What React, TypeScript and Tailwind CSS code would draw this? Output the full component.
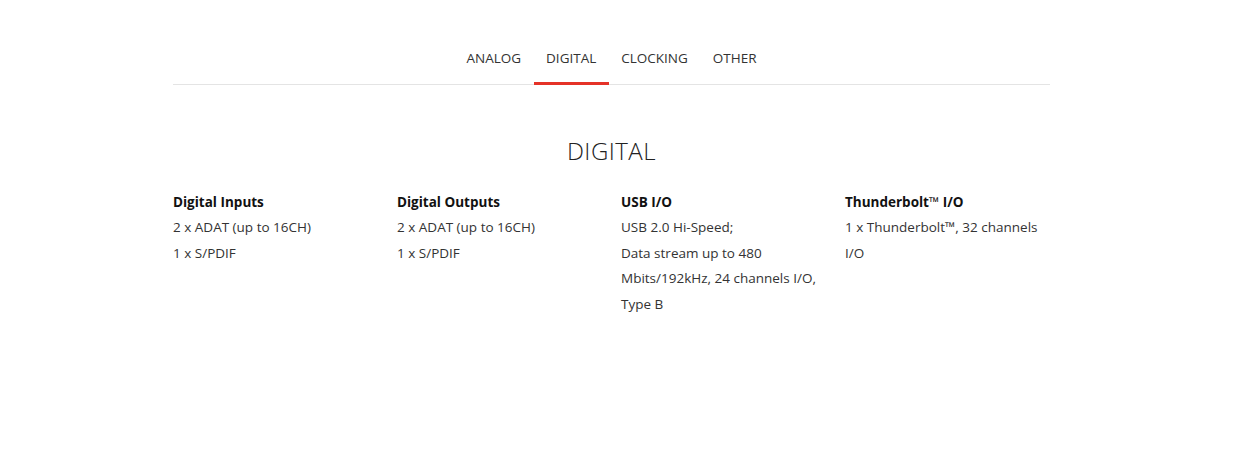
import React from "react";

const tabs = ["ANALOG", "DIGITAL", "CLOCKING", "OTHER"];

const cols = [
  { title: <>Digital Inputs</>, lines: ["2 x ADAT (up to 16CH)", "1 x S/PDIF"] },
  { title: <>Digital Outputs</>, lines: ["2 x ADAT (up to 16CH)", "1 x S/PDIF"] },
  {
    title: <>USB I/O</>,
    lines: ["USB 2.0 Hi-Speed;", "Data stream up to 480 Mbits/192kHz, 24 channels I/O, Type B"],
  },
  {
    title: (
      <>
        Thunderbolt<span className="font-normal">™</span> I/O
      </>
    ),
    lines: ["1 x Thunderbolt™, 32 channels I/O"],
  },
];

export default function App() {
  return (
    <div
      className="w-[1236px] h-[476px] bg-white text-[#222]"
      style={{ fontFamily: '"Open Sans", sans-serif' }}
    >
      <div className="ml-[173px] w-[877px] pt-[46px]">
        <div className="flex justify-center border-b border-[#e4e4e4]">
          {tabs.map((t) => (
            <div
              key={t}
              className="relative px-[12.5px] pb-[14px] text-[13.5px] leading-[24px] text-[#333]"
            >
              {t}
              {t === "DIGITAL" && (
                <div className="absolute left-0 right-0 bottom-[-1px] h-[3px] bg-[#e53228]" />
              )}
            </div>
          ))}
        </div>
        <h2 className="mt-[48px] text-center text-[24px] leading-[36px] font-light tracking-[0.5px] text-[#222]">
          DIGITAL
        </h2>
        <div className="mt-[21px] grid grid-cols-[repeat(4,204px)] gap-x-[20px]">
          {cols.map((c, i) => (
            <div key={i}>
              <div className="text-[13.5px] leading-[24px] font-bold text-[#111]">{c.title}</div>
              <div className="mt-[1px]">
                {c.lines.map((l, j) => (
                  <p key={j} className="text-[13.5px] leading-[25.5px] text-[#333]">
                    {l}
                  </p>
                ))}
              </div>
            </div>
          ))}
        </div>
      </div>
    </div>
  );
}
